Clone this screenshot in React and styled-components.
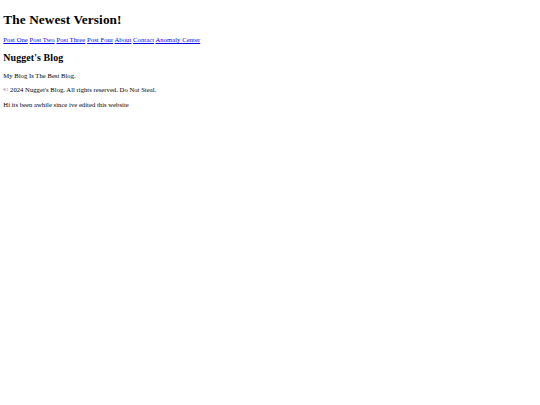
import React from "react";
import styled, { createGlobalStyle } from "styled-components";

const S = 540 / 1300;
const px = (v) => `${(v * S).toFixed(3)}px`;

const Global = createGlobalStyle`
  html {
    background: #ffffff;
  }
  body {
    margin: ${px(8)};
    font-family: "Liberation Serif", "Times New Roman", serif;
    font-size: ${px(16)};
    line-height: 1.15;
    color: #000000;
    background: #ffffff;
  }
`;

const Title = styled.h1`
  font-size: ${px(32)};
  font-weight: bold;
  letter-spacing: 0.09px;
  margin: ${px(21.44)} 0;
`;

const Nav = styled.nav`
  display: block;
  letter-spacing: 0.055px;
  margin: ${px(16)} 0;
`;

const NavLink = styled.a`
  color: #0000ee;
  text-decoration: underline;
`;

const BlogName = styled.h2`
  font-size: ${px(24)};
  font-weight: bold;
  letter-spacing: 0.08px;
  margin: ${px(19.92)} 0;
`;

const Text = styled.p`
  letter-spacing: 0.03px;
  margin: ${px(16)} 0;
`;

const Footer = styled.footer`
  display: block;
`;

const links = ["Post One", "Post Two", "Post Three", "Post Four", "About", "Contact", "Anomaly Center"];

export default function App() {
  return (
    <>
      <Global />
      <header>
        <Title>The Newest Version!</Title>
        <Nav>
          {links.map((l, i) => (
            <React.Fragment key={l}>
              <NavLink href="#">{l}</NavLink>
              {i < links.length - 1 ? " " : null}
            </React.Fragment>
          ))}
        </Nav>
      </header>
      <main>
        <BlogName>Nugget's Blog</BlogName>
        <Text>My Blog Is The Best Blog.</Text>
      </main>
      <Footer>
        <Text>© 2024 Nugget's Blog. All rights reserved. Do Not Steal.</Text>
      </Footer>
      <Text>Hi its been awhile since ive edited this website</Text>
    </>
  );
}
